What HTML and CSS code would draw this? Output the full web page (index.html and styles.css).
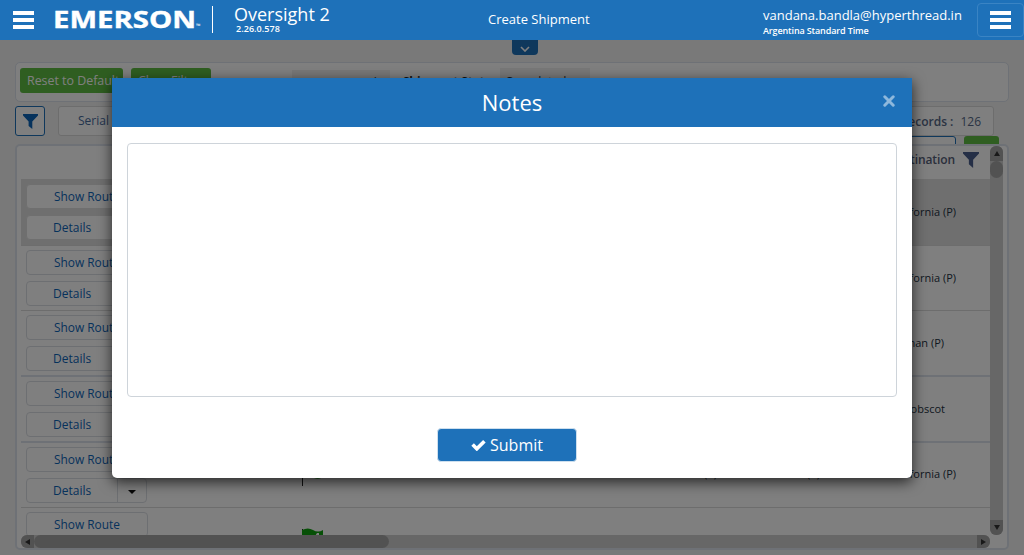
FILE: index.html
```html
<!DOCTYPE html>
<html lang="en">
<head>
<meta charset="utf-8">
<title>Create Shipment</title>
<link rel="stylesheet" href="styles.css">
</head>
<body>
<header class="topbar">
  <div class="burger left-burger"><i></i><i></i><i></i></div>
  <svg class="logo" width="150" height="30" viewBox="0 0 150 30"><text class="logo-name" x="0" y="22.7" textLength="143" lengthAdjust="spacingAndGlyphs">EMERSON</text><text class="logo-tm" x="143" y="22.7">™</text></svg>
  <div class="product"><span class="product-name">Oversight 2</span><span class="version">2.26.0.578</span></div>
  <div class="page-title">Create Shipment</div>
  <div class="user"><span class="email">vandana.bandla@hyperthread.in</span><span class="zone">Argentina Standard Time</span></div>
  <div class="menu-button"><div class="burger"><i></i><i></i><i></i></div></div>
</header>
<main class="page">
  <div class="drawer-tab"><svg width="10" height="6" viewBox="0 0 10 6"><path d="M1 1l4 4 4-4" fill="none" stroke="#fff" stroke-width="1.6"/></svg></div>
  <section class="filters">
    <button class="green">Reset to Default</button>
    <button class="green clear">Clear Filters</button>
    <span class="chip range">Last Two Weeks</span>
    <b class="status-label">Shipment Status</b>
    <span class="chip status">Completed</span>
  </section>
  <section class="tools">
    <div class="filter-button"><svg width="15" height="15" viewBox="0 0 15 15"><path d="M0 0h15v1.5L9.3 7.5V15L5.6 12V7.5L0 1.5z" fill="#0d65b8"/></svg></div>
    <div class="serial">Serial Number</div>
    <div class="records"><b>Records :</b><span>126</span></div>
  </section>
  <section class="actions"><div class="outline-box"></div><div class="green-box"></div></section>
  <section class="grid">
    <div class="table">
      <div class="head"><span>Destination</span><svg width="16" height="16" viewBox="0 0 15 15"><path d="M0 0h15v1.3L9.5 7.2V15L5.5 11.5V7.2L0 1.3z" fill="#4a5f8c"/></svg></div>
      <div class="row selected"><div class="ops"><div class="btn">Show Route</div><div class="split"><span>Details</span><i></i></div></div><span class="dest">California (P)</span></div>
      <div class="row short"><div class="ops"><div class="btn">Show Route</div><div class="split"><span>Details</span><i></i></div></div><span class="dest">California (P)</span></div>
      <div class="row thick"><div class="ops"><div class="btn">Show Route</div><div class="split"><span>Details</span><i></i></div></div><span class="dest dothan">Dothan (P)</span></div>
      <div class="row thick"><div class="ops"><div class="btn">Show Route</div><div class="split"><span>Details</span><i></i></div></div><span class="dest penobscot">Penobscot</span></div>
      <div class="row short"><div class="ops"><div class="btn">Show Route</div><div class="split"><span>Details</span><i></i></div></div>
        <svg class="flag" width="24" height="30" viewBox="0 0 24 30"><path d="M1.5 1v29" stroke="#222"/><path d="M1 2q6-3 11 0t10 0v19q-4 3-9 1t-12-1z" fill="#0fa00f"/></svg>
        <span class="cell carrier">California (P)</span><span class="cell origin">California (P)</span><span class="dest upper">California (P)</span></div>
      <div class="row"><div class="ops"><div class="btn">Show Route</div><div class="split"><span>Details</span><i></i></div></div>
        <svg class="flag lower" width="24" height="30" viewBox="0 0 24 30"><path d="M1.5 1v29" stroke="#222"/><path d="M1 2q6-3 11 0t10 0v12q-5 2-10 0t-11 0z" fill="#0fa00f"/><path d="M13 10l3-5h2v5" fill="#fff"/></svg></div>
    </div>
    <div class="vbar"><div class="cap up"></div><div class="vthumb"></div><div class="cap down"></div></div>
    <div class="hbar"><div class="cap prev"></div><div class="hthumb"></div><div class="cap next"></div></div>
  </section>
</main>
<div class="overlay">
  <div class="modal">
    <div class="modal-head"><h1>Notes</h1><svg class="close" width="12" height="12" viewBox="0 0 12 12"><path d="M1.8 1.8l8.4 8.4M10.2 1.8l-8.4 8.4" stroke="#8eb8dc" stroke-width="3" stroke-linecap="round"/></svg></div>
    <textarea class="notes"></textarea>
    <button class="submit"><svg width="15" height="12" viewBox="0 0 15 12"><path d="M1.6 5.6l4.2 4.2 7.6-7.6" fill="none" stroke="#fff" stroke-width="3.6"/></svg>Submit</button>
  </div>
</div>
</body>
</html>
```
FILE: styles.css
```css
* { box-sizing: border-box; }
body { margin: 0; height: 555px; overflow: hidden; font-family: "Open Sans", sans-serif; font-size: 12px; color: #333; background: #f2f2f2; }
.topbar { position: relative; z-index: 3; height: 40px; background: #1e71b9; color: #fff; display: flex; align-items: flex-start; }
.burger { width: 21px; display: flex; flex-direction: column; gap: 3px; }
.burger i { height: 4px; background: #fff; }
.left-burger { margin: 11px 0 0 13px; }
.logo { margin: 5px 0 0 19px; }
.logo-name { font: 700 23.5px "Open Sans", sans-serif; fill: #fff; stroke: #fff; stroke-width: .4; }
.logo-tm { font: 6px "Open Sans", sans-serif; fill: #fff; }
.product { margin: 6px 0 0 9px; height: 27px; border-left: 1px solid #fff; padding-left: 21px; width: 276px; display: flex; flex-direction: column; }
.product-name { font-size: 18px; line-height: 18px; margin-top: -1px; }
.version { font-size: 9px; line-height: 12px; font-weight: 600; padding-left: 2px; letter-spacing: .05px; }
.page-title { font-size: 13px; line-height: 18px; margin-top: 10px; width: 275px; }
.user { margin-top: 6px; width: 214px; display: flex; flex-direction: column; }
.email { font-size: 13px; line-height: 18px; }
.zone { font-size: 9px; line-height: 13px; font-weight: 600; letter-spacing: -.13px; }
.menu-button { margin-top: 3px; width: 47px; height: 34px; border: 1px solid #3a84c4; border-radius: 4px; padding: 7px 0 0 12px; }
.page { height: 515px; display: flex; flex-direction: column; }
.drawer-tab { width: 26px; height: 15px; margin-left: 512px; background: #1e71b9; border-radius: 0 0 4px 4px; display: flex; justify-content: center; align-items: center; flex: none; padding-top: 2px; }
.filters { margin: 7px 15px 0; height: 40px; flex: none; background: #fff; border: 1px solid #dce2ec; border-radius: 5px; padding: 5px 4px; display: flex; align-items: flex-start; white-space: nowrap; }
.green { width: 103px; height: 25px; padding: 0 7px; border: 0; border-radius: 3px; background: #5ebd42; color: #fff; font: 12.4px "Open Sans", sans-serif; text-align: left; white-space: nowrap; }
.green.clear { width: 80px; margin-left: 8px; }
.chip { background: #f0f0f0; height: 25px; line-height: 25px; padding-left: 5px; }
.range { margin: 2px 0 0 81px; width: 98px; }
.status-label { margin-left: 13px; width: 97px; line-height: 27px; font-size: 11.5px; color: #222; }
.status { width: 90px; line-height: 27px; }
.tools { display: flex; margin: 4px 30px 0 15px; height: 30px; flex: none; }
.filter-button { width: 30px; border: 1px solid #1e71b9; border-radius: 3px; background: #fff; display: grid; place-items: center; }
.serial { width: 130px; margin-left: 13px; border: 1px solid #dadada; border-radius: 3px; background: #fff; padding-left: 19px; line-height: 27px; color: #476a9c; font-size: 12px; }
.records { width: 160px; margin-left: auto; border: 1px solid #dadada; border-radius: 3px; background: #fff; display: flex; justify-content: flex-end; gap: 7px; padding-right: 12px; line-height: 29px; color: #566887; }
.records b { font-weight: 600; }
.actions { display: flex; justify-content: flex-end; gap: 8px; height: 8px; margin: 0 25px 0 0; flex: none; overflow: hidden; }
.outline-box { width: 150px; height: 24px; border: 1px solid #1e71b9; border-radius: 3px; background: #fff; }
.green-box { width: 35px; height: 24px; border-radius: 3px; background: #5ebd42; }
.grid { margin: 0 15px; height: 406px; flex: none; background: #fff; border: 2px solid #dce3ec; border-radius: 5px; padding-left: 4px; display: grid; grid-template-columns: 969px 13px; grid-template-rows: 389px 13px; }
.table { overflow: hidden; }
.head { height: 33px; display: flex; justify-content: flex-end; gap: 8px; padding: 6px 11px 0 0; font-weight: 600; color: #566078; line-height: 15px; font-size: 12px; letter-spacing: -.1px; }
.row { height: 66px; border-bottom: 1px solid #dadada; padding: 4px 0 0 5px; display: flex; position: relative; }
.row.selected { height: 67px; padding-top: 5px; background: #dfdfdf; }
.row.short { height: 65px; }
.row.thick { border-bottom: 2px solid #dce3ec; }
.ops { width: 122px; flex: none; display: flex; flex-direction: column; gap: 6px; color: #0d65b8; }
.btn, .split { height: 25px; border: 1px solid #dadee4; border-radius: 4px; background: #fff; line-height: 24px; }
.selected .btn, .selected .split { border-color: #dfdfdf; }
.btn { padding-left: 27px; font-size: 11.9px; line-height: 22px; }
.split { display: flex; width: 121px; }
.split span { width: 91px; padding-left: 26px; border-right: 1px solid #dadee4; }
.split i { margin: 11px 0 0 10px; height: 0; border: 4px solid transparent; border-top-color: #111; border-bottom: 0; }
.dest { width: 90px; margin-left: auto; margin-right: 34px; text-align: right; font-size: 11px; line-height: 15px; padding-top: 20px; color: #243142; }
.dest.upper { padding-top: 19px; }
.dothan { margin-right: 46px; }
.penobscot { margin-right: 45px; }
.cell { width: 90px; text-align: right; font-size: 11px; line-height: 15px; padding-top: 19px; color: #243142; }
.carrier { margin-left: 302px; }
.origin { margin-left: 13px; }
.flag { flex: none; margin: 9px 0 0 153px; }
.flag.lower { margin-top: 16px; }
.vbar { background: #cecece; border-radius: 6px; display: flex; flex-direction: column; }
.hbar { background: #cecece; border-radius: 6px; display: flex; }
.cap { background: #a5a5a5; display: grid; place-items: center; flex: none; }
.up { height: 15px; border-radius: 6px 6px 0 0; }
.down { height: 15px; margin-top: auto; border-radius: 0 0 6px 6px; }
.prev { width: 13px; border-radius: 6px 0 0 6px; }
.next { width: 13px; margin-left: auto; border-radius: 0 6px 6px 0; }
.cap::after { content: ""; border: 3px solid transparent; }
.up::after { border-bottom: 5px solid #333; border-top: 0; }
.down::after { border-top: 5px solid #333; border-bottom: 0; }
.prev::after { border-right: 5px solid #333; border-left: 0; }
.next::after { border-left: 5px solid #333; border-right: 0; }
.vthumb { height: 17px; background: #a5a5a5; border-radius: 7px; }
.hthumb { width: 355px; background: #a5a5a5; border-radius: 7px; }
.overlay { position: absolute; inset: 40px 0 0; background: rgba(0,0,0,.5); z-index: 2; padding: 38px 112px 0; }
.modal { height: 400px; background: #fff; border-radius: 0 0 5px 5px; box-shadow: 0 4px 14px rgba(0,0,0,.7); display: flex; flex-direction: column; align-items: center; }
.modal-head { align-self: stretch; height: 49px; background: #1e71b9; display: grid; grid-template-columns: 1fr auto 1fr; align-items: center; color: #fff; }
.modal-head h1 { grid-column: 2; margin: 0 0 2px; font-size: 22px; font-weight: 400; line-height: 30px; }
.close { justify-self: end; margin: 0 17px 3px 0; }
.notes { margin-top: 16px; width: 770px; height: 254px; flex: none; border: 1px solid #ced4da; border-radius: 4px; resize: none; background: #fff; }
.submit { margin: 31px 10px 0 0; width: 140px; height: 34px; border: 1px solid #cddfee; border-radius: 4px; background: #1e71b9; color: #fff; font: 16px "Open Sans", sans-serif; display: flex; align-items: center; justify-content: center; gap: 4px; }
```
